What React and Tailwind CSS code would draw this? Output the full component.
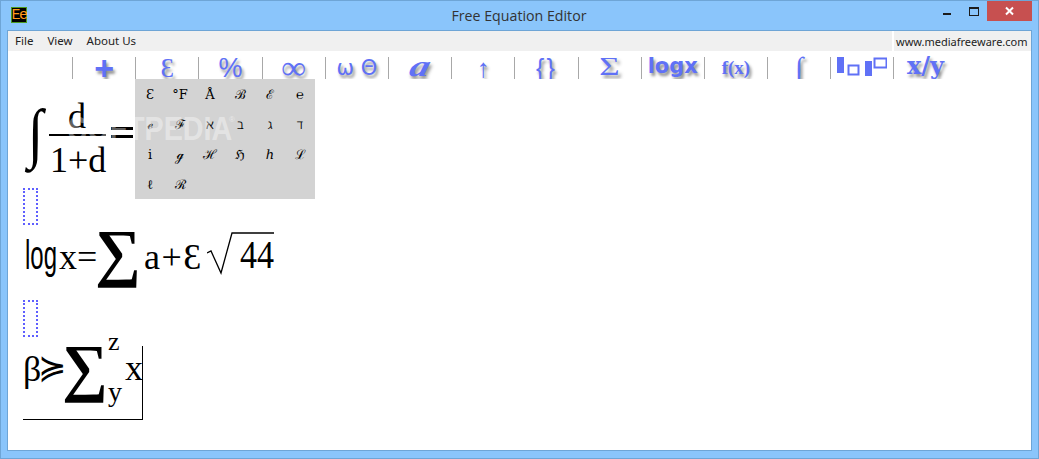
import React from "react";

const toolbarItems = [
  { label: "+", cls: "font-['Liberation_Sans',sans-serif] font-bold text-[34px]" },
  { label: "Ɛ", cls: "font-['Liberation_Serif',serif] text-[27px]" },
  { label: "%", cls: "font-['Liberation_Sans',sans-serif] text-[27px]" },
  { label: "∞", cls: "font-['Liberation_Serif',serif] font-bold text-[34px]" },
  { label: "ω Θ", cls: "font-['DejaVu_Sans',sans-serif] text-[21px]" },
  { label: "a", cls: "font-['Liberation_Serif',serif] font-bold italic text-[30px] scale-x-[1.3] -skew-x-12 -mt-[5px]" },
  { label: "↑", cls: "font-['Liberation_Sans',sans-serif] text-[26px]" },
  { label: "{}", cls: "font-['Liberation_Sans',sans-serif] text-[25px] tracking-[2px]" },
  { label: "Σ", cls: "font-['Liberation_Serif',serif] text-[26px] scale-x-[1.35] -mt-[2px]" },
  { label: "logx", cls: "font-['DejaVu_Sans',sans-serif] font-bold text-[21px] -mt-[4px]" },
  { label: "f(x)", cls: "font-['Liberation_Serif',serif] font-bold text-[19px]" },
  { label: "∫", cls: "font-['Liberation_Serif',serif] italic text-[30px]" },
  { label: "boxes" },
  { label: "x/y", cls: "font-['DejaVu_Serif',serif] font-bold text-[24px] -mt-[5px]" },
];

const symbols = ["Ɛ", "°F", "Å", "ℬ", "ℰ", "℮", "ℯ", "ℱ", "ℵ", "ℶ", "ℷ", "ℸ", "ⅰ", "ℊ", "ℋ", "ℌ", "ℎ", "ℒ", "ℓ", "ℛ"];

const AppIcon = () => (
  <div className="w-[16px] h-[16px] bg-black border border-[#4c9a1f] flex items-center justify-center font-['Liberation_Mono',monospace] text-[15px] tracking-[-1.5px] leading-none text-[#ff9a1a]">
    Ee
  </div>
);

const WindowButtons = () => (
  <div className="flex items-start h-[21px] mr-[6px]">
    <svg width="26" height="21"><rect x="8" y="12" width="8" height="2" fill="#1c1c1c" /></svg>
    <svg width="26" height="21"><rect x="8.5" y="6.5" width="9" height="8" fill="none" stroke="#1c1c1c" /><rect x="8" y="6" width="10" height="2" fill="#1c1c1c" /></svg>
    <div className="w-[45px] h-[20px] bg-[#c75050] flex items-center justify-center">
      <svg width="10" height="10"><path d="M1 1.5 L8 8.5 M8 1.5 L1 8.5" stroke="#fff" strokeWidth="2" /></svg>
    </div>
  </div>
);

const Boxes = () => (
  <svg width="50" height="20" viewBox="0 0 50 20" className="-mt-[2px]">
    <rect x="0" y="0" width="7" height="16" fill="#6071f6" />
    <rect x="11.5" y="8.5" width="10" height="9" fill="none" stroke="#6071f6" strokeWidth="2" />
    <rect x="28" y="4" width="7" height="15" fill="#6071f6" />
    <rect x="37.5" y="1.5" width="12" height="9" fill="none" stroke="#6071f6" strokeWidth="2" />
  </svg>
);

const Toolbar = () => (
  <div className="flex h-[28px] pl-[64px] bg-white">
    {toolbarItems.map((item) => (
      <div
        key={item.label}
        className="w-[63.2px] h-[22px] mt-[6px] border-l border-[#a8a8a8] flex items-center justify-center shrink-0"
      >
        {item.label === "boxes" ? (
          <Boxes />
        ) : (
          <span className={`${item.cls} leading-[22px] text-[#6071f6] whitespace-nowrap [text-shadow:2px_3px_3px_#8f8f8f]`}>{item.label}</span>
        )}
      </div>
    ))}
  </div>
);

const SymbolPicker = () => (
  <div className="absolute left-[127px] top-0 w-[180px] h-[120px] bg-[#d3d3d3] grid grid-cols-6 auto-rows-[30px]">
    {symbols.map((s) => (
      <div key={s} className="flex items-center justify-center font-['DejaVu_Serif',serif] text-[13px] leading-none text-black">
        {s}
      </div>
    ))}
  </div>
);

// Equations sit on a free canvas, each glyph where the editor placed it
const Equations = () => (
  <div className="absolute inset-0 font-['Liberation_Serif',serif] text-black leading-none">
    {/* first formula */}
    <span className="absolute left-[20px] top-[21px] text-[66px] leading-none origin-top-left scale-x-[0.85]">∫</span>
    <span className="absolute left-[60px] top-[19px] text-[36px]">d</span>
    <div className="absolute left-[41px] top-[55px] w-[57px] h-[2px] bg-black" />
    <span className="absolute left-[42px] top-[63px] text-[36px]">1+d</span>
    <div className="absolute left-[103px] top-[48px] w-[22px] h-[3px] bg-black" />
    <div className="absolute left-[103px] top-[56px] w-[22px] h-[3px] bg-black" />

    <div className="absolute left-[15px] top-[109px] w-[15px] h-[37px] border-2 border-dotted border-[#5f5fff]" />

    {/* second formula */}
    <span className="absolute left-[17px] top-[156px] text-[40px] font-['Liberation_Sans',sans-serif] origin-top-left scale-x-[0.6]">log</span>
    <span className="absolute left-[51px] top-[160px] text-[36px]">x=</span>
    <span className="absolute left-[87px] top-[142px] text-[64px] font-bold">∑</span>
    <span className="absolute left-[136px] top-[160px] text-[36px] tracking-[1.5px]">a+Ɛ</span>
    <svg className="absolute left-[199px] top-[152px]" width="70" height="44">
      <path d="M0 22 L4 20 L14 42 L25 2 L67 2" fill="none" stroke="#000" strokeWidth="1.3" />
    </svg>
    <span className="absolute left-[232px] top-[155px] text-[41px] origin-top-left scale-x-[0.83]">44</span>

    <div className="absolute left-[15px] top-[221px] w-[15px] h-[37px] border-2 border-dotted border-[#5f5fff]" />

    {/* third formula */}
    <span className="absolute left-[15px] top-[272px] text-[36px]">β</span>
    <span className="absolute left-[30px] top-[271px] text-[34px] font-['DejaVu_Sans',sans-serif]">≽</span>
    <span className="absolute left-[54px] top-[257px] text-[64px] font-bold">∑</span>
    <span className="absolute left-[100px] top-[250px] text-[26px]">z</span>
    <span className="absolute left-[100px] top-[299px] text-[28px]">y</span>
    <span className="absolute left-[117px] top-[271px] text-[36px]">x</span>
    <div className="absolute left-[134px] top-[267px] w-[1px] h-[73px] bg-black" />
    <div className="absolute left-[15px] top-[340px] w-[120px] h-[1px] bg-black" />

    {/* watermark */}
    <span className="absolute left-[60px] top-[33px] text-[33px] font-bold font-['Liberation_Sans',sans-serif] text-white/40 origin-top-left scale-x-[0.87] whitespace-nowrap">SOFTPEDIA</span>
    <span className="absolute left-[221px] top-[37px] text-[8px] font-['Liberation_Sans',sans-serif] text-white/50">®</span>
  </div>
);

export default function App() {
  return (
    <div className="w-[1039px] h-[459px] bg-[#8ac5fb] border border-[#6ea5d6] flex flex-col overflow-hidden">
      <div className="h-[29px] flex items-start shrink-0">
        <div className="ml-[10px] mt-[6px]">
          <AppIcon />
        </div>
        <div className="flex-1 text-center pl-[76px] pt-[6px] text-[14.2px] leading-[18px] text-[#333] font-['Open_Sans',sans-serif]">
          Free Equation Editor
        </div>
        <WindowButtons />
      </div>

      <div className="mx-[6px] mb-[7px] flex-1 flex flex-col border border-[#6ea5d6] bg-white min-h-0">
        <div className="h-[20px] bg-[#f0f0f0] flex items-center shrink-0 font-['Noto_Sans',sans-serif] text-[11.5px] text-[#222]">
          <div className="flex gap-[14px] pl-[7px] flex-1">
            <span>File</span>
            <span>View</span>
            <span>About Us</span>
          </div>
          <div className="w-[139px] h-full border-l-2 border-white pl-[2px] pt-[1px] leading-[19px] whitespace-nowrap text-[11px]">www.mediafreeware.com</div>
        </div>
        <Toolbar />
        <div className="relative flex-1 bg-white overflow-hidden">
          <SymbolPicker />
          <Equations />
        </div>
      </div>
    </div>
  );
}
